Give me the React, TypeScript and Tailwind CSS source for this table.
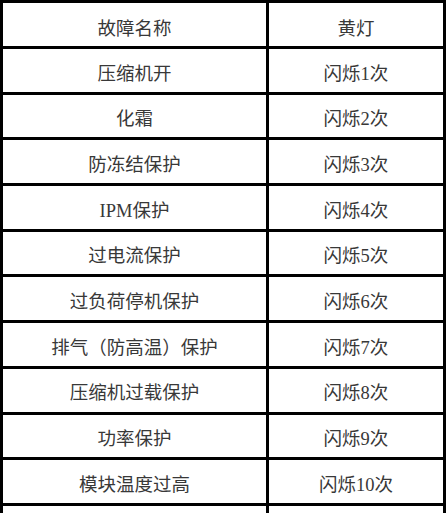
const rows: [string, string][] = [
  ['压缩机开', '闪烁1次'],
  ['化霜', '闪烁2次'],
  ['防冻结保护', '闪烁3次'],
  ['IPM保护', '闪烁4次'],
  ['过电流保护', '闪烁5次'],
  ['过负荷停机保护', '闪烁6次'],
  ['排气（防高温）保护', '闪烁7次'],
  ['压缩机过载保护', '闪烁8次'],
  ['功率保护', '闪烁9次'],
  ['模块温度过高', '闪烁10次'],
  ['', ''],
];

function Row({ name, blink, head }: { name: string; blink: string; head?: boolean }) {
  const h = head ? 'h-[46px] pt-[9px]' : 'h-[45.7px] pt-[7px]';
  return (
    <div className="flex">
      <div className={`w-[266px] ${h} flex items-center justify-center border-r-[3px] border-b-[3px] border-black`}>
        {name}
      </div>
      <div className={`w-[177px] ${h} flex items-center justify-center border-r-[3px] border-b-[3px] border-black`}>
        {blink}
      </div>
    </div>
  );
}

export default function App() {
  return (
    <div className="w-[448px] h-[513px] overflow-hidden bg-white">
      <div
        className="w-[446px] border-l-[3px] border-t-[3px] border-black text-[18.5px] leading-none text-[#383838]"
        style={{ fontFamily: '"Liberation Serif", "Noto Sans CJK SC", serif' }}
      >
        <Row name="故障名称" blink="黄灯" head />
        {rows.map(([n, b], i) => (
          <Row key={i} name={n} blink={b} />
        ))}
      </div>
    </div>
  );
}
